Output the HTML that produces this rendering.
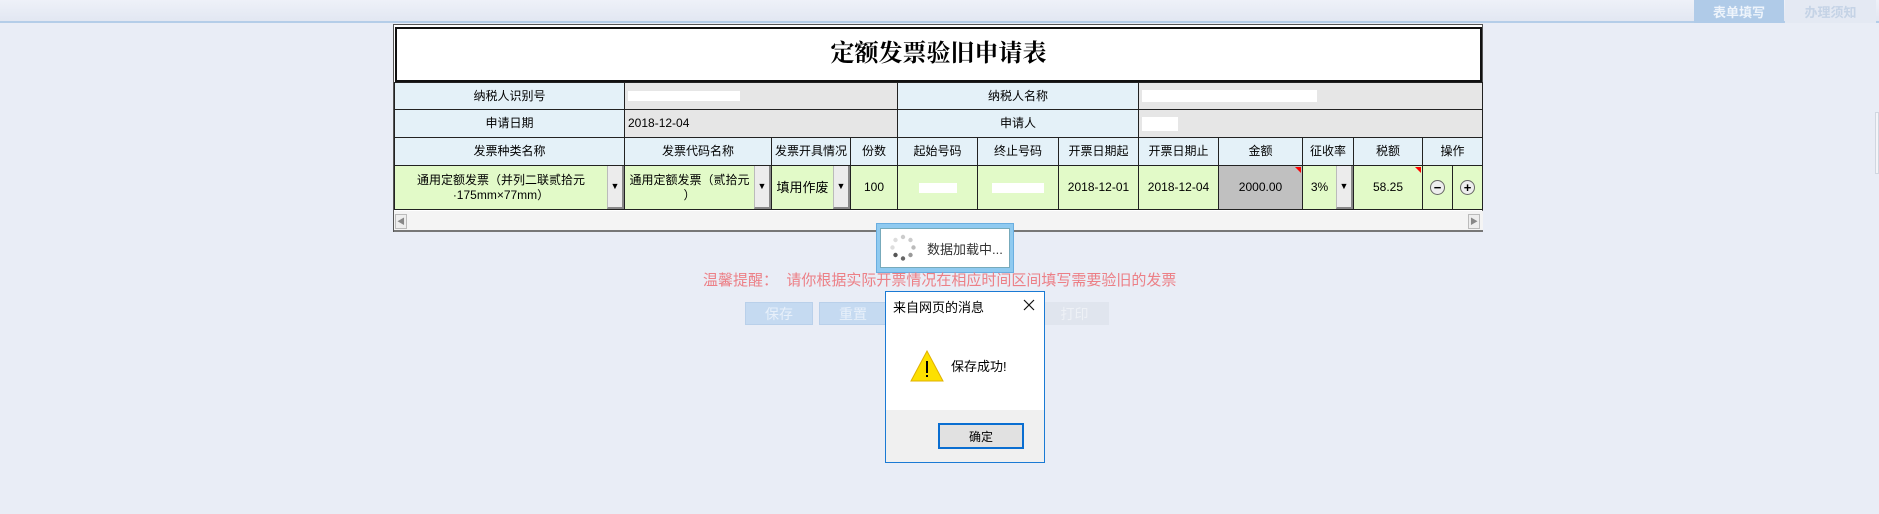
<!DOCTYPE html>
<html><head><meta charset="utf-8"><style>
*{margin:0;padding:0;box-sizing:border-box}
body{width:1879px;height:514px;background:#e9edf6;position:relative;overflow:hidden;font-family:"Liberation Sans","Noto Sans CJK SC",sans-serif;font-size:12px;color:#000}
.a{position:absolute}
.c{position:absolute;border:1px solid #222;display:flex;align-items:center;justify-content:center;text-align:center;line-height:15px}
.h{background:#e4f1f8}
.v{background:#e6e6e6;justify-content:flex-start;padding-left:3px}
.g{background:#e2fac8}
.dd{position:absolute;top:0;right:0;width:17px;height:100%;background:#ececec;border-left:1px solid #bbb;border-right:2px solid #888;border-bottom:2px solid #888;display:flex;align-items:center;justify-content:center;font-size:9px}
.btn{position:absolute;height:23px;background:#c5daf1;color:#e8f0fa;font-size:14px;display:flex;align-items:center;justify-content:center;border:1px solid #b9d0ea}
</style></head><body>
<div class="a" style="left:0;top:0;width:1879px;height:23px;background:linear-gradient(#eef1f8,#e2e7f2);border-bottom:2px solid #b4cde8"></div>
<div class="a" style="left:1694px;top:0;width:90px;height:23px;background:#b0cbe8;color:#eef4fb;font-weight:bold;font-size:13px;display:flex;align-items:center;justify-content:center">表单填写</div>
<div class="a" style="left:1785px;top:0;width:91px;height:23px;background:#e4e9f3;color:#c5d3e6;font-weight:bold;font-size:13px;display:flex;align-items:center;justify-content:center">办理须知</div>
<div class="a" style="left:1875px;top:112px;width:4px;height:62px;background:#f3f5f9;border:1px solid #d0d6e0"></div>

<div class="a" style="left:393px;top:24px;width:1090px;height:208px;background:#fff;border:1px solid #555"></div>
<div class="c" style="left:395px;top:27px;width:1087px;height:55px;background:#fff;border:2px solid #111;font-family:'Liberation Serif','Noto Serif CJK SC',serif;font-size:24px;font-weight:bold">定额发票验旧申请表</div>

<div class="c h" style="left:394px;top:82px;width:231px;height:28px">纳税人识别号</div>
<div class="c v" style="left:624px;top:82px;width:274px;height:28px"><span style="background:#fff;width:112px;height:10px;display:inline-block"></span></div>
<div class="c h" style="left:897px;top:82px;width:242px;height:28px">纳税人名称</div>
<div class="c v" style="left:1138px;top:82px;width:345px;height:28px"><span style="background:#fff;width:175px;height:12px;display:inline-block"></span></div>
<div class="c h" style="left:394px;top:109px;width:231px;height:29px">申请日期</div>
<div class="c v" style="left:624px;top:109px;width:274px;height:29px">2018-12-04</div>
<div class="c h" style="left:897px;top:109px;width:242px;height:29px">申请人</div>
<div class="c v" style="left:1138px;top:109px;width:345px;height:29px"><span style="background:#fff;width:36px;height:14px;display:inline-block"></span></div>

<div class="c h" style="left:394px;top:137px;width:231px;height:29px">发票种类名称</div>
<div class="c h" style="left:624px;top:137px;width:148px;height:29px">发票代码名称</div>
<div class="c h" style="left:771px;top:137px;width:80px;height:29px">发票开具情况</div>
<div class="c h" style="left:850px;top:137px;width:48px;height:29px">份数</div>
<div class="c h" style="left:897px;top:137px;width:81px;height:29px">起始号码</div>
<div class="c h" style="left:977px;top:137px;width:82px;height:29px">终止号码</div>
<div class="c h" style="left:1058px;top:137px;width:81px;height:29px">开票日期起</div>
<div class="c h" style="left:1138px;top:137px;width:81px;height:29px">开票日期止</div>
<div class="c h" style="left:1218px;top:137px;width:85px;height:29px">金额</div>
<div class="c h" style="left:1302px;top:137px;width:52px;height:29px">征收率</div>
<div class="c h" style="left:1353px;top:137px;width:70px;height:29px">税额</div>
<div class="c h" style="left:1422px;top:137px;width:61px;height:29px">操作</div>

<div class="c g" style="left:394px;top:165px;width:231px;height:45px;padding-right:17px">通用定额发票（并列二联贰拾元<br>·175mm×77mm）<div class="dd">▼</div></div>
<div class="c g" style="left:624px;top:165px;width:148px;height:45px;padding-right:17px">通用定额发票（贰拾元<br>）<div class="dd">▼</div></div>
<div class="c g" style="left:771px;top:165px;width:80px;height:45px;padding-right:17px;font-size:13px">填用作废<div class="dd">▼</div></div>
<div class="c g" style="left:850px;top:165px;width:48px;height:45px">100</div>
<div class="c g" style="left:897px;top:165px;width:81px;height:45px"><span style="background:#fff;width:38px;height:10px;display:inline-block"></span></div>
<div class="c g" style="left:977px;top:165px;width:82px;height:45px"><span style="background:#fff;width:52px;height:10px;display:inline-block"></span></div>
<div class="c g" style="left:1058px;top:165px;width:81px;height:45px">2018-12-01</div>
<div class="c g" style="left:1138px;top:165px;width:81px;height:45px">2018-12-04</div>
<div class="c" style="left:1218px;top:165px;width:85px;height:45px;background:#c0c0c0">2000.00<div class="a" style="right:1px;top:1px;border-top:6px solid red;border-left:6px solid transparent"></div></div>
<div class="c g" style="left:1302px;top:165px;width:52px;height:45px;padding-right:17px">3%<div class="dd">▼</div></div>
<div class="c g" style="left:1353px;top:165px;width:70px;height:45px">58.25<div class="a" style="right:1px;top:1px;border-top:6px solid red;border-left:6px solid transparent"></div></div>
<div class="c g" style="left:1422px;top:165px;width:31px;height:45px"><span style="width:15px;height:15px;border:1px solid #666;border-radius:50%;background:#eee;display:flex;align-items:center;justify-content:center;font-weight:bold;font-size:13px;line-height:1">−</span></div>
<div class="c g" style="left:1452px;top:165px;width:31px;height:45px"><span style="width:15px;height:15px;border:1px solid #666;border-radius:50%;background:#eee;display:flex;align-items:center;justify-content:center;font-weight:bold;font-size:13px;line-height:1">+</span></div>

<div class="a" style="left:394px;top:211px;width:1089px;height:21px;background:#f4f4f4;border-bottom:2px solid #777"></div>
<div class="a" style="left:395px;top:214px;width:12px;height:15px;background:#eee;border:1px solid #bbb;font-size:8px;color:#888;text-align:center;line-height:13px">◀</div>
<div class="a" style="left:1468px;top:214px;width:12px;height:15px;background:#eee;border:1px solid #bbb;font-size:8px;color:#888;text-align:center;line-height:13px">▶</div>

<div class="a" style="left:876px;top:223px;width:138px;height:50px;background:#8fcaf0;border:1px solid #6aaee0"></div>
<div class="a" style="left:880px;top:228px;width:130px;height:40px;background:#fff;border:1px solid #7ab"></div>
<svg class="a" style="left:889px;top:234px" width="28" height="28" viewBox="0 0 28 28">
<g fill="#999"><circle cx="14" cy="3" r="2.2" fill="#ccc"/><circle cx="21.5" cy="6" r="2.2" fill="#ccc"/><circle cx="24.5" cy="13.5" r="2.2" fill="#bbb"/><circle cx="21.5" cy="21" r="2.2" fill="#999"/><circle cx="14" cy="24.5" r="2.2" fill="#666"/><circle cx="6.5" cy="21" r="2.2" fill="#555"/><circle cx="3.5" cy="13.5" r="2.2" fill="#ddd"/><circle cx="6.5" cy="6" r="2.2" fill="#ddd"/></g></svg>
<div class="a" style="left:927px;top:239px;font-size:13px;color:#333">数据加载中...</div>

<div class="a" style="left:703px;top:269px;font-size:15px;color:#ec7f86;white-space:nowrap">温馨提醒：&nbsp;&nbsp;请你根据实际开票情况在相应时间区间填写需要验旧的发票</div>

<div class="btn" style="left:745px;top:302px;width:68px">保存</div>
<div class="btn" style="left:819px;top:302px;width:68px">重置</div>
<div class="btn" style="left:1040px;top:302px;width:69px;background:#e0e5ee;border-color:#e0e5ee;color:#eef1f6">打印</div>

<div class="a" style="left:885px;top:291px;width:160px;height:172px;background:#fff;border:1px solid #1a7ad4"></div>
<div class="a" style="left:893px;top:297px;font-size:13px">来自网页的消息</div>
<svg class="a" style="left:1023px;top:299px" width="12" height="12"><path d="M1 1L11 11M11 1L1 11" stroke="#111" stroke-width="1.2"/></svg>
<svg class="a" style="left:910px;top:350px" width="34" height="32"><path d="M17 1L33 31H1Z" fill="#fde000" stroke="#e0b000"/><rect x="16" y="11" width="2" height="12" fill="#000"/><rect x="16" y="25" width="2" height="2" fill="#000"/></svg>
<div class="a" style="left:951px;top:356px;font-size:13px">保存成功!</div>
<div class="a" style="left:886px;top:410px;width:158px;height:52px;background:#f0f0f0"></div>
<div class="a" style="left:938px;top:423px;width:86px;height:26px;background:#e1e1e1;border:2px solid #0a6ed1;display:flex;align-items:center;justify-content:center;font-size:12px">确定</div>
</body></html>
